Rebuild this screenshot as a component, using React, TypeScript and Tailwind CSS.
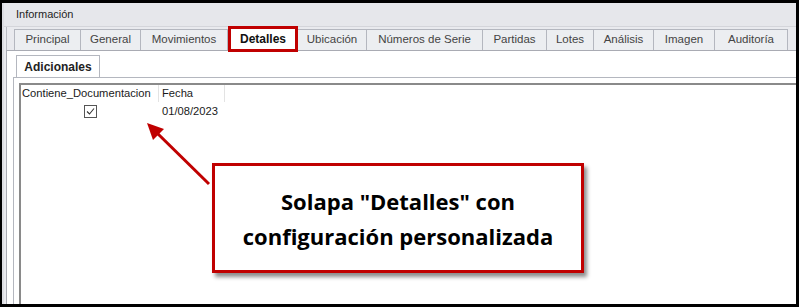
import React from "react";

const tabs: { label: string; w: number; selected?: boolean }[] = [
  { label: "Principal", w: 67 },
  { label: "General", w: 61 },
  { label: "Movimientos", w: 88 },
  { label: "Detalles", w: 70, selected: true },
  { label: "Ubicación", w: 70 },
  { label: "Números de Serie", w: 117 },
  { label: "Partidas", w: 65 },
  { label: "Lotes", w: 48 },
  { label: "Análisis", w: 61 },
  { label: "Imagen", w: 62 },
  { label: "Auditoría", w: 74 },
];

export default function App() {
  return (
    <div className="w-[799px] h-[307px] bg-black pt-[3px] pl-[2px] pr-[3px] pb-[3px] relative overflow-hidden" style={{ fontFamily: '"Liberation Sans", Arial, sans-serif' }}>
      <div className="w-full h-full bg-[#e9eaee] flex flex-col border-l-[2px] border-[#dcdde2]">
        {/* header */}
        <div className="h-[24px] flex items-center pl-[12px] text-[11px] text-[#1e1e1e] bg-[#e6e7eb] border-b border-[#d4d5da]">
          Información
        </div>
        {/* tabs row */}
        <div className="h-[23px] flex items-end pl-[8px] border-l border-[#b9bbc2] ml-[2px]">
          {tabs.map((t) =>
            t.selected ? (
              <div key={t.label} className="h-[26px] -mb-[2px] bg-white border-[3px] border-[#c00000] flex items-center justify-center text-[12px] font-bold text-[#111] relative z-10" style={{ width: t.w }}>
                {t.label}
              </div>
            ) : (
              <div key={t.label} className="h-[21px] bg-[#eceef1] border border-b-0 border-[#b4b7bf] -ml-[1px] flex items-center justify-center text-[11.5px] text-[#444]" style={{ width: t.w }}>
                {t.label}
              </div>
            )
          )}
        </div>
        {/* panel */}
        <div className="flex-1 ml-[2px] bg-white border-l border-t border-[#a9abb3] flex flex-col pl-[6px] pt-[4px]">
          <div className="flex items-end">
            <div className="w-[84px] h-[22px] border border-b-0 border-[#b4b7bf] flex items-center justify-center text-[12px] font-bold text-[#222] bg-white ml-[3px]">
              Adicionales
            </div>
          </div>
          <div className="flex-1 border-l border-t border-[#b4b7bf] pl-[5px] pt-[5px]">
            <div className="h-full border-l-[2px] border-t-[2px] border-[#8a8a8a] flex flex-col">
              <div className="flex h-[17px] text-[11.2px] text-[#1a1a1a]">
                <div className="w-[138px] pl-[1px] border-r border-[#e3e3e3] flex items-center">Contiene_Documentacion</div>
                <div className="w-[66px] pl-[3px] border-r border-[#e3e3e3] flex items-center">Fecha</div>
              </div>
              <div className="flex h-[18px] text-[11.2px] text-[#1a1a1a]">
                <div className="w-[138px] flex items-center justify-center">
                  <div className="w-[13px] h-[13px] border border-[#555] flex items-center justify-center">
                    <svg width="11" height="11" viewBox="0 0 11 11">
                      <path d="M2 5.5 L4.5 8 L9 2.5" stroke="#333" strokeWidth="1.1" fill="none" />
                    </svg>
                  </div>
                </div>
                <div className="w-[66px] pl-[3px] flex items-center">01/08/2023</div>
              </div>
            </div>
          </div>
        </div>
      </div>

      {/* arrow */}
      <svg className="absolute left-0 top-0" width="799" height="307" viewBox="0 0 799 307">
        <line x1="209" y1="184" x2="155" y2="131" stroke="#c00000" strokeWidth="3" />
        <polygon points="147,123 164,129 153,140" fill="#c00000" />
      </svg>

      {/* callout */}
      <div className="absolute left-[212px] top-[163px] w-[372px] h-[110px] bg-white border-[3px] border-[#c00000] flex flex-col items-center justify-center shadow-[3px_4px_4px_rgba(0,0,0,0.45)] text-[22px] leading-[35px] font-bold text-black" style={{ fontFamily: '"Open Sans", "Noto Sans", sans-serif' }}>
        <div className="pt-[2px]">Solapa "Detalles" con</div>
        <div>configuración personalizada</div>
      </div>
    </div>
  );
}
